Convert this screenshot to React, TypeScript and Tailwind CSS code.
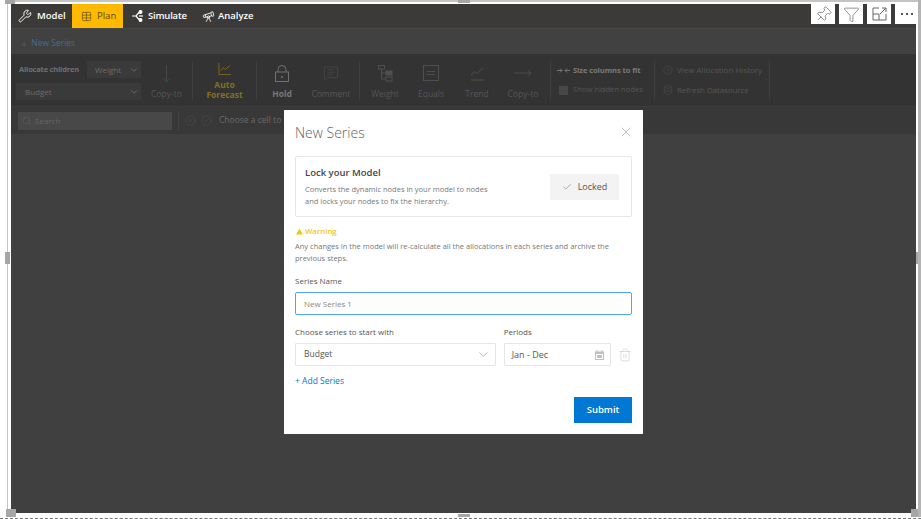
import type { ReactNode } from 'react';
import {
  Wrench, Table, Telescope, MessageSquareText, Clock, Database,
  ChevronDown, Search, CircleX, CircleCheck, X, Check, Trash2, Pin, Funnel,
} from 'lucide-react';

function ToolButton({ label, width, icon, bold = false }: { label: string; width: string; icon: ReactNode; bold?: boolean }) {
  return (
    <div className={`${width} flex flex-col items-center justify-between h-full pt-[4px] pb-[1px] text-[8.5px] leading-[10px] text-center ${bold ? 'text-[#777777] font-bold' : 'text-[#565656]'}`}>
      {icon}
      <span>{label}</span>
    </div>
  );
}

function Sep() {
  return <div className="w-px self-stretch bg-[#3e3e3e]" />;
}

function Field({ label, className, children }: { label: string; className: string; children: ReactNode }) {
  return (
    <div className={className}>
      <div className="text-[8px] leading-[12px] text-[#555555] mb-[5px]">{label}</div>
      {children}
    </div>
  );
}

export default function App() {
  return (
    <div className="relative w-[921px] h-[519px] bg-white pl-[7px] pr-[3px] pb-[3px] border-b border-dashed border-[#777777] overflow-hidden font-['Open_Sans',sans-serif]">
      <div className="h-full border-l border-t-2 border-[#c4c4c4] pl-[3px] pt-[2px] pr-[2px] pb-[2px]">
        <div className="h-full bg-[#404040] flex flex-col">

          {/* top nav */}
          <div className="h-[25px] bg-[#3b3a38] border-b border-[#484848] flex items-stretch text-[9.5px] font-semibold text-white shrink-0">
            <div className="flex items-center gap-[5px] pl-[7px] w-[61px]">
              <Wrench size={14} strokeWidth={1.6} />
              <span>Model</span>
            </div>
            <div className="w-[51px] bg-[#ffb900] text-[#5b4a10] font-normal flex items-center gap-[5px] pl-[9px]">
              <Table size={11} strokeWidth={1.4} />
              <span>Plan</span>
            </div>
            <div className="flex items-center gap-[4px] pl-[9px] w-[79px]">
              <svg width="12" height="12" viewBox="0 0 12 12" fill="none" stroke="white" strokeWidth="1.2">
                <path d="M0 6h4l3-3.5M4 6l3 3.5" />
                <circle cx="8.5" cy="2" r="1.4" fill="white" />
                <circle cx="8.5" cy="10" r="1.4" fill="white" />
                <path d="M7 6h4" />
              </svg>
              <span className="tracking-[-0.2px]">Simulate</span>
            </div>
            <div className="flex items-center gap-[3px]">
              <Telescope size={13} strokeWidth={1.6} />
              <span>Analyze</span>
            </div>
          </div>

          {/* series row */}
          <div className="h-[25px] bg-[#414141] flex items-center pl-[10px] pt-[3px] gap-[4px] text-[8.5px] shrink-0">
            <span className="text-[#5e5e5e] text-[11px] leading-none">+</span>
            <span className="text-[#3f6f92]">New Series</span>
          </div>

          {/* ribbon */}
          <div className="h-[53px] bg-[#333333] border-b border-[#3c3c3c] flex items-stretch pt-[7px] pb-[6px] pl-[5px] shrink-0">
            <div className="w-[125px] flex flex-col justify-between">
              <div className="flex items-center justify-between pl-[3px]">
                <span className="text-[7.5px] tracking-[-0.2px] font-bold text-[#717171]">Allocate children</span>
                <div className="w-[54px] h-[17px] bg-[#3a3a3a] flex items-center justify-between pl-[8px] pr-[2px] text-[8px] text-[#6d6d6d]">
                  Weight <ChevronDown size={10} />
                </div>
              </div>
              <div className="h-[17px] bg-[#3a3a3a] flex items-center justify-between pl-[9px] pr-[2px] text-[8px] text-[#6d6d6d]">
                Budget <ChevronDown size={10} />
              </div>
            </div>
            <ToolButton width="w-[51px]" label="Copy-to" icon={
              <svg width="9" height="18" viewBox="0 0 9 18" fill="none" stroke="#4e4e4e" strokeWidth="0.8">
                <path d="M4.5 0v17M1 13.5l3.5 3.5L8 13.5" />
              </svg>
            } />
            <Sep />
            <div className="w-[63px] pt-[2px] flex flex-col items-center text-[8.5px] leading-[10px] font-bold text-[#84701f] text-center">
              <svg width="15" height="14" viewBox="0 0 15 14" fill="none" stroke="#84701f" strokeWidth="1" className="mb-[5px]">
                <path d="M1 0v13.5h14" />
                <path d="M3 9l3-3.5 2.5 2L14 3" />
              </svg>
              <span>Auto<br />Forecast</span>
            </div>
            <Sep />
            <ToolButton width="w-[50px]" label="Hold" bold icon={
              <svg width="14" height="17" viewBox="0 0 14 17" fill="none" stroke="#707070" strokeWidth="1">
                <rect x="0.5" y="7" width="13" height="9.5" />
                <path d="M3 7V4.5a4 4 0 0 1 8 0V7" />
                <path d="M7 11v2" strokeWidth="1.6" />
              </svg>
            } />
            <div className="mr-[4px] h-full">
              <ToolButton width="w-[48px]" label="Comment" icon={<MessageSquareText size={16} strokeWidth={0.9} className="text-[#505050]" />} />
            </div>
            <Sep />
            <ToolButton width="w-[50px]" label="Weight" icon={
              <svg width="15" height="17" viewBox="0 0 15 17" fill="none" stroke="#505050" strokeWidth="1">
                <rect x="0.5" y="0.5" width="6" height="3.5" />
                <rect x="8" y="6" width="6" height="4" fill="#505050" />
                <rect x="8" y="12" width="6" height="4" />
                <path d="M3.5 4v10H8M3.5 8H8" />
              </svg>
            } />
            <ToolButton width="w-[42px]" label="Equals" icon={
              <svg width="16" height="16" viewBox="0 0 16 16" fill="none" stroke="#4e4e4e" strokeWidth="1">
                <rect x="0.5" y="0.5" width="15" height="15" />
                <path d="M4 6.5h8M4 9.5h8" />
              </svg>
            } />
            <ToolButton width="w-[50px]" label="Trend" icon={
              <svg width="15" height="15" viewBox="0 0 15 15" fill="none" stroke="#505050" strokeWidth="1" className="mt-[1px]">
                <path d="M1 9l4-3.5 2 2L13 2M1 14h13" />
              </svg>
            } />
            <div className="mr-[6px] h-full">
              <ToolButton width="w-[42px]" label="Copy-to" icon={
                <svg width="18" height="8" viewBox="0 0 18 8" fill="none" stroke="#505050" strokeWidth="0.8" className="mt-[4px]">
                  <path d="M0 4h17M13.5 0.5L17 4l-3.5 3.5" />
                </svg>
              } />
            </div>
            <Sep />
            <div className="w-[103px] pl-[6px] flex flex-col gap-[8px] text-[7.6px]">
              <div className="flex items-center gap-[3px] font-bold tracking-[-0.1px] text-[#7c7c7c] mt-[4px]">
                <svg width="13" height="7" viewBox="0 0 13 7" fill="none" stroke="#7c7c7c" strokeWidth="0.9">
                  <path d="M0 3.5h5M3 1.5l2 2-2 2M13 3.5H8M10 1.5l-2 2 2 2" />
                </svg>
                <span>Size columns to fit</span>
              </div>
              <div className="flex items-center gap-[5px] pl-[2px] text-[#565656]">
                <div className="w-[9px] h-[9px] bg-[#484848]" />
                <span>Show hidden nodes</span>
              </div>
            </div>
            <Sep />
            <div className="w-[114px] pl-[8px] flex flex-col gap-[8px] text-[8px] text-[#565656]">
              <div className="flex items-center gap-[4px] mt-[3px]">
                <Clock size={10} strokeWidth={0.9} />
                <span>View Allocation History</span>
              </div>
              <div className="flex items-center gap-[4px]">
                <Database size={10} strokeWidth={0.9} />
                <span className="tracking-[-0.1px]">Refresh Datasource</span>
              </div>
            </div>
            <Sep />
          </div>

          {/* search row */}
          <div className="h-[27px] bg-[#383838] flex items-center pl-[7px] shrink-0">
            <div className="w-[154px] h-[18px] bg-[#484848] flex items-center gap-[3px] pl-[4px] text-[8px] text-[#656565]">
              <Search size={10} strokeWidth={1} />
              <span>Search</span>
            </div>
            <div className="w-px h-[20px] bg-[#404040] ml-[6px]" />
            <CircleX size={11} strokeWidth={0.8} className="text-[#5c5c5c] ml-[6px]" />
            <CircleCheck size={11} strokeWidth={0.8} className="text-[#5c5c5c] ml-[5px]" />
            <span className="ml-[7px] text-[8.5px] text-[#6a6a6a]">Choose a cell to edit</span>
          </div>

          <div className="flex-1" />
        </div>
      </div>

      {/* visual header buttons */}
      <div className="absolute top-[4px] left-[811px] flex gap-[4px] text-[#666666]">
        <div className="w-[24px] h-[20px] bg-white flex items-center justify-center"><Pin size={17} strokeWidth={1} className="rotate-45" /></div>
        <div className="w-[24px] h-[20px] bg-white flex items-center justify-center"><Funnel size={17} strokeWidth={1} /></div>
        <div className="w-[24px] h-[20px] bg-white flex items-center justify-center">
          <svg width="15" height="14" viewBox="0 0 15 14" fill="none" stroke="#666666" strokeWidth="1">
            <path d="M7 1H1v12h13V7M1 7h6v6M8 7l6-6M10 1h4v4" />
          </svg>
        </div>
        <div className="w-[23px] h-[20px] bg-white flex items-center justify-center gap-[3px]">
          <div className="w-[2px] h-[2px] bg-[#555555]" />
          <div className="w-[2px] h-[2px] bg-[#555555]" />
          <div className="w-[2px] h-[2px] bg-[#555555]" />
        </div>
      </div>

      {/* frame handles */}
      <div className="absolute left-[5px] top-0 w-[10px] h-[4px] bg-[#a6a6a6]" />
      <div className="absolute left-[458px] top-0 w-[12px] h-[3px] bg-[#a6a6a6]" />
      <div className="absolute left-[5px] top-[252px] w-[5px] h-[12px] bg-[#a6a6a6]" />
      <div className="absolute left-[916px] top-[252px] w-[5px] h-[12px] bg-[#a6a6a6]" />
      <div className="absolute left-[6px] top-[509px] w-[10px] h-[8px] bg-[#a6a6a6]" />
      <div className="absolute left-[458px] top-[514px] w-[12px] h-[3px] bg-[#a6a6a6]" />
      <div className="absolute left-[911px] top-[509px] w-[10px] h-[8px] bg-[#a6a6a6]" />
      <div className="absolute left-[918px] top-0 w-[3px] h-[517px] bg-[#b4b4b4]" />

      {/* dialog */}
      <div className="absolute left-[284px] top-[110px] w-[359px] h-[324px] bg-white px-[11px] pt-[12px] flex flex-col">
        <div className="flex items-center justify-between h-[20px]">
          <span className="text-[14px] font-light text-[#5f5f5f]">New Series</span>
          <X size={16} strokeWidth={0.8} className="text-[#8a8a8a] -mr-[2px]" />
        </div>

        <div className="mt-[14px] h-[61px] border border-[#e6e6e6] rounded-[2px] flex items-center justify-between pl-[9px] pr-[12px]">
          <div>
            <div className="text-[9.5px] leading-[13px] font-semibold text-[#444444] mb-[4px]">Lock your Model</div>
            <div className="text-[7.5px] leading-[12px] text-[#777777]">
              Converts the dynamic nodes in your model to nodes<br />and locks your nodes to fix the hierarchy.
            </div>
          </div>
          <div className="w-[69px] h-[26px] bg-[#f3f3f3] flex items-center justify-center gap-[6px] text-[9px] text-[#555555]">
            <Check size={10} strokeWidth={1} className="text-[#444444]" />
            <span>Locked</span>
          </div>
        </div>

        <div className="mt-[8px] flex items-center gap-[2px] text-[7.8px] leading-[12px] font-semibold text-[#f2c811]">
          <svg width="7" height="7" viewBox="0 0 8 7" className="ml-[1px]"><path d="M4 0l4 7H0z" fill="#f2c811" /></svg>
          <span>Warning</span>
        </div>
        <div className="mt-[3px] text-[7.5px] leading-[12px] text-[#777777]">
          Any changes in the model will re-calculate all the allocations in each series and archive the<br />previous steps.
        </div>

        <Field label="Series Name" className="mt-[11px]">
          <div className="h-[23px] border border-blue-400 rounded-[2px] flex items-center pl-[8px] text-[8px] text-[#888888]">New Series 1</div>
        </Field>

        <div className="mt-[11px] flex items-end">
          <Field label="Choose series to start with" className="w-[202px]">
            <div className="h-[23px] border border-[#e6e6e6] rounded-[1px] flex items-center justify-between pl-[8px] pr-[4px] text-[8.5px] text-[#555555]">
              Budget <ChevronDown size={15} strokeWidth={0.8} className="text-[#777777]" />
            </div>
          </Field>
          <Field label="Periods" className="w-[108px] ml-[8px]">
            <div className="h-[23px] border border-[#e6e6e6] rounded-[1px] flex items-center justify-between pl-[7px] pr-[6px] text-[9px] text-[#555555]">
              Jan - Dec
              <svg width="9" height="10" viewBox="0 0 9 10" fill="#c0c0c0">
                <path d="M1.5 0h1v1.5h-1zM6.5 0h1v1.5h-1zM0 1.5h9V10H0zM1 4v5h7V4z" fillRule="evenodd" />
                <path d="M2 5h5v3H2z" />
              </svg>
            </div>
          </Field>
          <div className="h-[23px] ml-[7px] flex items-center">
            <Trash2 size={14} strokeWidth={1} className="text-[#c8c8c8]" />
          </div>
        </div>

        <div className="mt-[9px] text-[8.5px] leading-[12px] text-[#0078d4]">+ Add Series</div>

        <div className="mt-[10px] flex justify-end">
          <div className="w-[58px] h-[26px] bg-[#0078d4] flex items-center justify-center text-[9.5px] font-semibold text-white">Submit</div>
        </div>
      </div>
    </div>
  );
}
